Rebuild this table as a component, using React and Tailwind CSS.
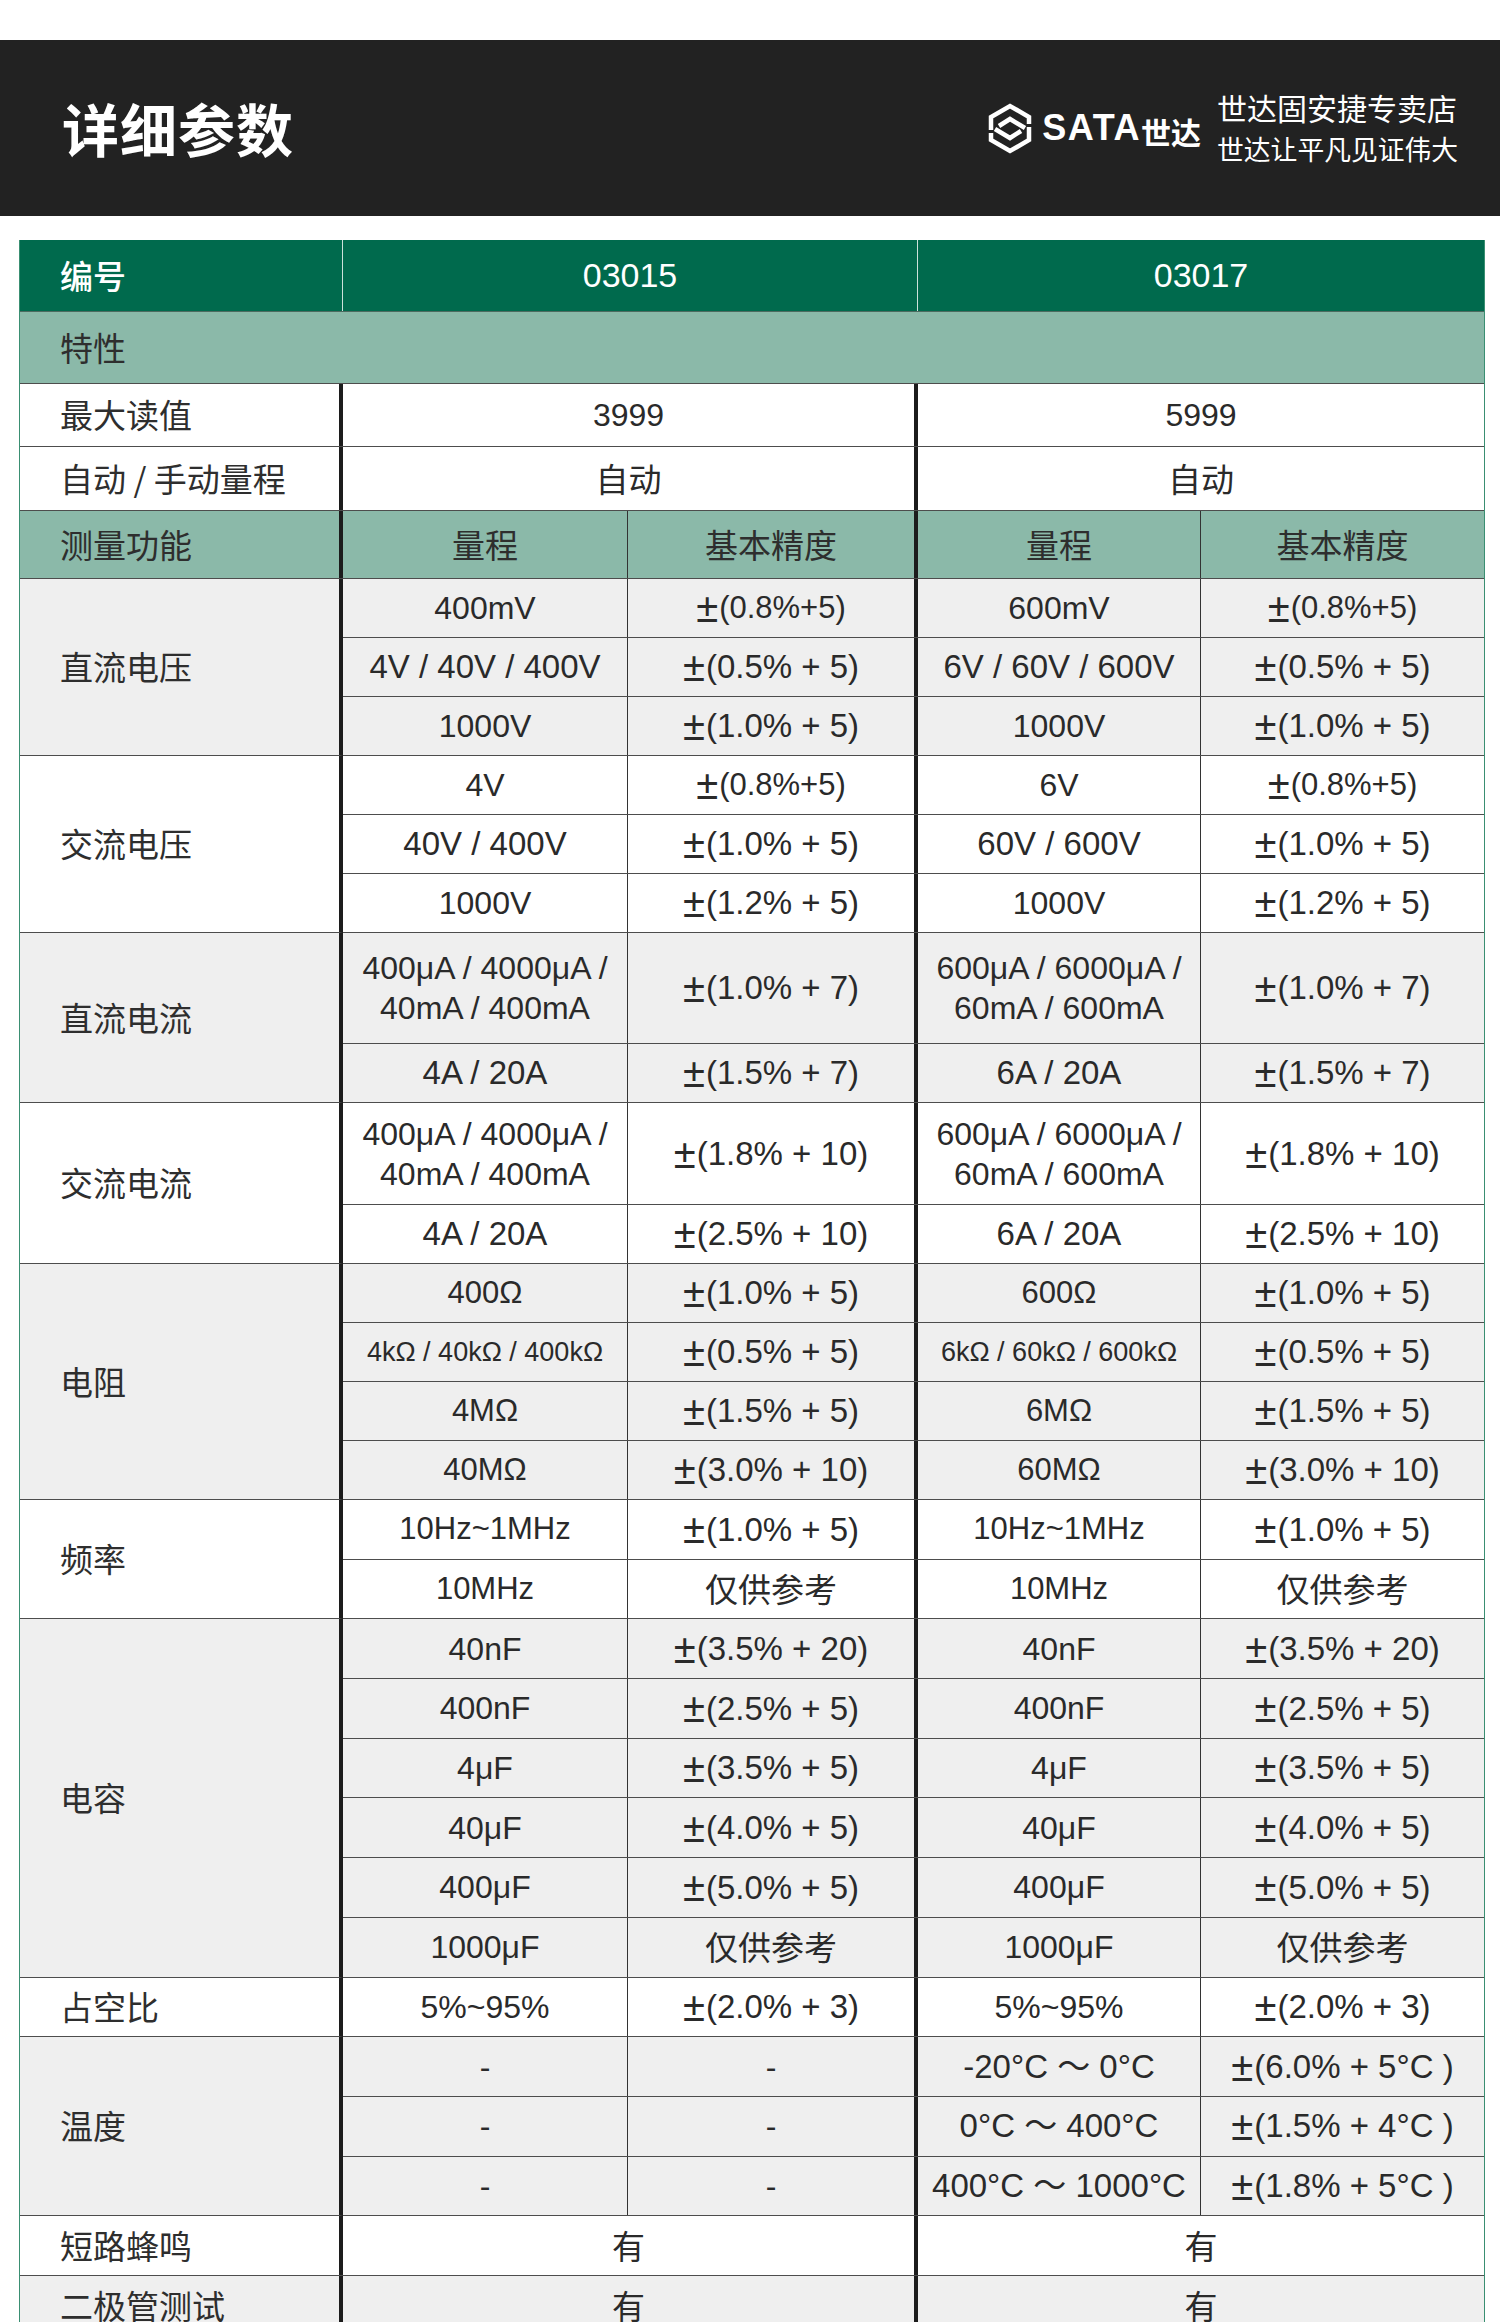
import React from 'react';

const NUM = "font-['Liberation_Sans','Noto_Sans_CJK_SC',sans-serif]";
const CJK = "font-['Noto_Sans_CJK_SC','Noto_Sans_CJK_JP',sans-serif]";

const GRAY = 'bg-[#efefef]';
const WHITE = 'bg-white';

// measurement groups: [range 03015, accuracy 03015, range 03017, accuracy 03017]
const groups = [
  {
    label: '直流电压',
    bg: GRAY,
    rows: [
      { cells: ['400mV', '±(0.8%+5)', '600mV', '±(0.8%+5)'] },
      { cells: ['4V / 40V / 400V', '±(0.5% + 5)', '6V / 60V / 600V', '±(0.5% + 5)'] },
      { cells: ['1000V', '±(1.0% + 5)', '1000V', '±(1.0% + 5)'] },
    ],
  },
  {
    label: '交流电压',
    bg: WHITE,
    rows: [
      { cells: ['4V', '±(0.8%+5)', '6V', '±(0.8%+5)'] },
      { cells: ['40V / 400V', '±(1.0% + 5)', '60V / 600V', '±(1.0% + 5)'] },
      { cells: ['1000V', '±(1.2% + 5)', '1000V', '±(1.2% + 5)'] },
    ],
  },
  {
    label: '直流电流',
    bg: GRAY,
    rows: [
      {
        h: 'h-[111px]',
        cells: [
          ['400μA / 4000μA /', '40mA / 400mA'],
          '±(1.0% + 7)',
          ['600μA / 6000μA /', '60mA / 600mA'],
          '±(1.0% + 7)',
        ],
      },
      { cells: ['4A / 20A', '±(1.5% + 7)', '6A / 20A', '±(1.5% + 7)'] },
    ],
  },
  {
    label: '交流电流',
    bg: WHITE,
    rows: [
      {
        h: 'h-[102px]',
        cells: [
          ['400μA / 4000μA /', '40mA / 400mA'],
          '±(1.8% + 10)',
          ['600μA / 6000μA /', '60mA / 600mA'],
          '±(1.8% + 10)',
        ],
      },
      { cells: ['4A / 20A', '±(2.5% + 10)', '6A / 20A', '±(2.5% + 10)'] },
    ],
  },
  {
    label: '电阻',
    bg: GRAY,
    rows: [
      { cells: ['400Ω', '±(1.0% + 5)', '600Ω', '±(1.0% + 5)'] },
      { cells: ['4kΩ / 40kΩ / 400kΩ', '±(0.5% + 5)', '6kΩ / 60kΩ / 600kΩ', '±(0.5% + 5)'] },
      { cells: ['4MΩ', '±(1.5% + 5)', '6MΩ', '±(1.5% + 5)'] },
      { cells: ['40MΩ', '±(3.0% + 10)', '60MΩ', '±(3.0% + 10)'] },
    ],
  },
  {
    label: '频率',
    bg: WHITE,
    lower: true,
    rows: [
      { cells: ['10Hz~1MHz', '±(1.0% + 5)', '10Hz~1MHz', '±(1.0% + 5)'] },
      { cells: ['10MHz', '仅供参考', '10MHz', '仅供参考'] },
    ],
  },
  {
    label: '电容',
    bg: GRAY,
    lower: true,
    rows: [
      { cells: ['40nF', '±(3.5% + 20)', '40nF', '±(3.5% + 20)'] },
      { cells: ['400nF', '±(2.5% + 5)', '400nF', '±(2.5% + 5)'] },
      { cells: ['4μF', '±(3.5% + 5)', '4μF', '±(3.5% + 5)'] },
      { cells: ['40μF', '±(4.0% + 5)', '40μF', '±(4.0% + 5)'] },
      { cells: ['400μF', '±(5.0% + 5)', '400μF', '±(5.0% + 5)'] },
      { cells: ['1000μF', '仅供参考', '1000μF', '仅供参考'] },
    ],
  },
  {
    label: '占空比',
    bg: WHITE,
    lower: true,
    rows: [{ cells: ['5%~95%', '±(2.0% + 3)', '5%~95%', '±(2.0% + 3)'] }],
  },
  {
    label: '温度',
    bg: GRAY,
    lower: true,
    rows: [
      { cells: ['-', '-', '-20°C ～ 0°C', '±(6.0% + 5°C )'] },
      { cells: ['-', '-', '0°C ～ 400°C', '±(1.5% + 4°C )'] },
      { cells: ['-', '-', '400°C ～ 1000°C', '±(1.8% + 5°C )'] },
    ],
  },
];

const hasCJK = (s) => /[\u4e00-\u9fff]/.test(s);

const sizeOf = (s) => {
  if (s.includes('kΩ')) return 'text-[27px]';
  if (s.includes('Ω') || s.includes('Hz')) return 'text-[31px]';
  if (!s.includes(' ')) return 'text-[32px]';
  return 'text-[33px]';
};

const Text = ({ value }) => {
  if (Array.isArray(value)) {
    return (
      <div className={`${NUM} text-[32px] leading-[40px] text-center text-[#2a2a2a]`}>
        {value.map((line) => (
          <div key={line}>{line}</div>
        ))}
      </div>
    );
  }
  if (hasCJK(value)) {
    return <span className={`${CJK} text-[33px] text-[#2a2a2a]`}>{value}</span>;
  }
  if (value.startsWith('±')) {
    // the plus-minus sign is drawn wider than the digits in the reference
    return (
      <span className={`${NUM} ${value.includes(' ') ? 'text-[33px]' : 'text-[31px]'} text-[#2a2a2a] whitespace-nowrap flex items-center`}>
        <span className="text-[40px] leading-none mr-[1px]">±</span>
        {value.slice(1)}
      </span>
    );
  }
  return <span className={`${NUM} ${sizeOf(value)} text-[#2a2a2a] whitespace-nowrap`}>{value}</span>;
};

const Label = ({ children, className = '' }) => (
  <div
    className={`w-[323px] shrink-0 border-r-4 border-[#1c1c1c] flex items-center pl-[40px] ${CJK} text-[33px] text-[#2e2e2e] ${className}`}
  >
    {children}
  </div>
);

const DataRow = ({ cells, h }) => (
  <div className={`flex ${h} border-b-[1.5px] border-[#4d4d4d]`}>
    <div className="w-[285px] shrink-0 border-r-[1.5px] border-[#333] flex items-center justify-center">
      <Text value={cells[0]} />
    </div>
    <div className="w-[290px] shrink-0 border-r-4 border-[#1c1c1c] flex items-center justify-center">
      <Text value={cells[1]} />
    </div>
    <div className="w-[283px] shrink-0 border-r-[1.5px] border-[#333] flex items-center justify-center">
      <Text value={cells[2]} />
    </div>
    <div className="flex-1 flex items-center justify-center">
      <Text value={cells[3]} />
    </div>
  </div>
);

const Group = ({ group }) => {
  const rowH = group.lower ? 'h-[59.7px]' : 'h-[59px]';
  return (
    <div className={`flex ${group.bg}`}>
      <Label className="border-b-[1.5px] border-b-[#4d4d4d]">{group.label}</Label>
      <div className="flex-1 flex flex-col">
        {group.rows.map((r, i) => (
          <DataRow key={i} cells={r.cells} h={r.h || rowH} />
        ))}
      </div>
    </div>
  );
};

const MergedRow = ({ label, left, right, h, bg }) => (
  <div className={`flex ${h} ${bg} border-b-[1.5px] border-[#4d4d4d]`}>
    <Label>{label}</Label>
    <div className="w-[575px] shrink-0 border-r-4 border-[#1c1c1c] flex items-center justify-center">
      <Text value={left} />
    </div>
    <div className="flex-1 flex items-center justify-center">
      <Text value={right} />
    </div>
  </div>
);

const SataLogo = () => (
  <div className="flex items-center gap-[9px]">
    <svg width="46" height="51" viewBox="0 0 46 51" fill="none" stroke="white" strokeWidth="4.5" strokeLinejoin="miter">
      <path d="M4 27 V14 L23 3 L42 14 V21" />
      <path d="M12 23 L23 16 L38 25" />
      <path d="M42 24 V37 L23 48 L4 37 V30" />
      <path d="M8 26 L23 35 L34 28" />
    </svg>
    <div className="flex items-end">
      <span className="font-['Liberation_Sans',sans-serif] font-bold text-[36px] leading-none text-white tracking-[1.5px]">
        SATA
      </span>
      <span className={`${CJK} font-bold text-[30px] leading-none text-white`}>世达</span>
    </div>
  </div>
);

export default function App() {
  return (
    <div className="w-[1500px] min-h-[2322px] bg-white pt-[40px] overflow-hidden">
      {/* page banner */}
      <div className="h-[176px] bg-[#222222] flex items-center justify-between pl-[62px] pr-[41px]">
        <h1 className={`${CJK} font-bold text-[57px] text-white tracking-[1px]`}>详细参数</h1>
        <div className="flex items-center gap-[16px]">
          <SataLogo />
          <div className={`${CJK} text-white w-[242px]`}>
            <div className="text-[30px] leading-[42px]">世达固安捷专卖店</div>
            <div className="text-[26.8px] leading-[42px]">世达让平凡见证伟大</div>
          </div>
        </div>
      </div>

      {/* spec table */}
      <div className="ml-[19px] mt-[24px] w-[1466px] border-x-[1.5px] border-[#3a8f72]">
        <div className="flex h-[72px] bg-[#006a4d] border-b-[1.5px] border-[#4d6b60]">
          <div className={`w-[323px] shrink-0 border-r-[1.5px] border-white/80 flex items-center pl-[40px] ${CJK} font-medium text-[33px] text-white`}>
            编号
          </div>
          <div className={`w-[575px] shrink-0 border-r-[1.5px] border-white/80 flex items-center justify-center ${NUM} text-[34px] text-white`}>
            03015
          </div>
          <div className={`flex-1 flex items-center justify-center ${NUM} text-[34px] text-white`}>03017</div>
        </div>

        <div className={`h-[72px] bg-[#8bb9a9] border-b-[1.5px] border-[#4d4d4d] flex items-center pl-[40px] ${CJK} text-[33px] text-[#2e2e2e]`}>
          特性
        </div>

        <MergedRow label="最大读值" left="3999" right="5999" h="h-[63px]" bg={WHITE} />
        <MergedRow label="自动 / 手动量程" left="自动" right="自动" h="h-[64px]" bg={WHITE} />

        <div className="flex h-[68px] bg-[#8bb9a9] border-b-[1.5px] border-[#4d4d4d]">
          <Label>测量功能</Label>
          <div className={`w-[285px] shrink-0 border-r-[1.5px] border-[#333] flex items-center justify-center ${CJK} text-[33px] text-[#2e2e2e]`}>
            量程
          </div>
          <div className={`w-[290px] shrink-0 border-r-4 border-[#1c1c1c] flex items-center justify-center ${CJK} text-[33px] text-[#2e2e2e]`}>
            基本精度
          </div>
          <div className={`w-[283px] shrink-0 border-r-[1.5px] border-[#333] flex items-center justify-center ${CJK} text-[33px] text-[#2e2e2e]`}>
            量程
          </div>
          <div className={`flex-1 flex items-center justify-center ${CJK} text-[33px] text-[#2e2e2e]`}>基本精度</div>
        </div>

        {groups.map((g) => (
          <Group key={g.label} group={g} />
        ))}

        <MergedRow label="短路蜂鸣" left="有" right="有" h="h-[59.7px]" bg={WHITE} />
        <MergedRow label="二极管测试" left="有" right="有" h="h-[59.7px]" bg={GRAY} />
      </div>
    </div>
  );
}
